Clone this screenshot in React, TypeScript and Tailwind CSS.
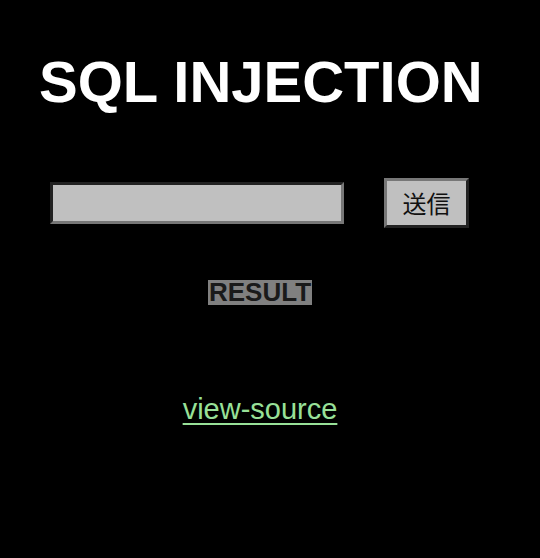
export default function App() {
  return (
    <div className="min-h-[558px] w-[540px] bg-black font-['Liberation_Sans',Arial,sans-serif]">
      <h1 className="pl-[39px] pt-[53px] text-[58px] font-bold leading-none text-white">
        SQL INJECTION
      </h1>

      <form className="mt-[67px] flex items-center pl-[50px]" onSubmit={e => e.preventDefault()}>
        <input
          type="text"
          className="h-[42px] w-[294px] border-[3px] border-t-[#222] border-l-[#222] border-b-[#777] border-r-[#777] bg-[#c0c0c0] outline-none"
        />
        <button
          type="submit"
          className="ml-[40px] h-[50px] w-[85px] border-[3px] border-t-[#777] border-l-[#777] border-b-[#222] border-r-[#222] bg-[#c0c0c0] text-[24px] text-[#111] font-['Noto_Sans_CJK_JP',sans-serif]"
        >
          送信
        </button>
      </form>

      <div className="mt-[52px] flex justify-center pr-[20px]">
        <span className="bg-[#808080] px-[1px] text-[26px] font-bold leading-[25px] text-[#1a1a1a]">
          RESULT
        </span>
      </div>

      <div className="mt-[90px] flex justify-center pr-[20px]">
        <a href="#" className="text-[29px] leading-none text-[#98e098] underline underline-offset-[4px]">
          view-source
        </a>
      </div>
    </div>
  )
}
